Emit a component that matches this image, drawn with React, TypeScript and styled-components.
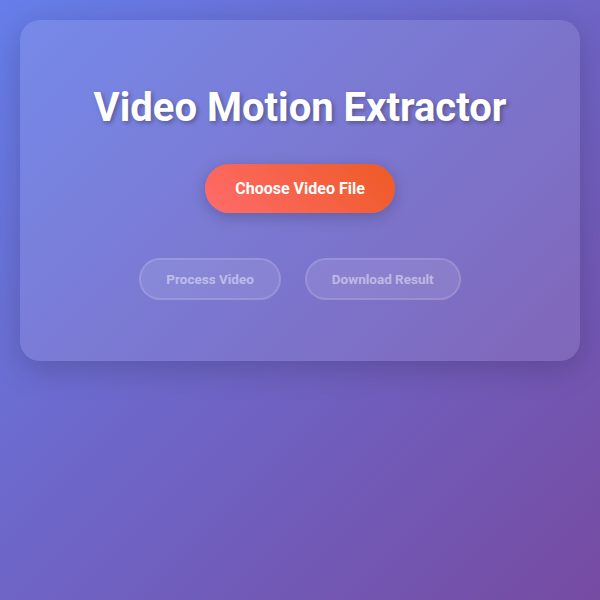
import styled, { createGlobalStyle } from "styled-components"

const GlobalStyle = createGlobalStyle`
  * {
    box-sizing: border-box;
  }
  body {
    margin: 0;
    font-family: Roboto, "Liberation Sans", sans-serif;
    background: linear-gradient(135deg, #667eea 0%, #764ba2 100%);
    min-height: 100vh;
    color: #fff;
  }
`

const Page = styled.div`
  padding: 20px;
`

const Card = styled.div`
  display: flex;
  flex-direction: column;
  align-items: center;
  padding: 40px;
  border-radius: 20px;
  background: rgba(255, 255, 255, 0.1);
  box-shadow: 0 8px 32px rgba(0, 0, 0, 0.18);
`

const Title = styled.h1`
  margin: 24px 0 33px;
  font-size: 40px;
  font-weight: 700;
  line-height: 47px;
  text-shadow: 2px 2px 4px rgba(0, 0, 0, 0.3);
`

const UploadButton = styled.button`
  padding: 15px 30px;
  border: none;
  border-radius: 50px;
  background: linear-gradient(45deg, #ff6b6b, #ee5a24);
  color: #fff;
  font-family: inherit;
  font-size: 16px;
  font-weight: 700;
  box-shadow: 0 4px 15px rgba(0, 0, 0, 0.2);
  cursor: pointer;
`

const ActionRow = styled.div`
  display: flex;
  gap: 24px;
  margin: 45px 0 21px;
`

const ActionButton = styled.button`
  padding: 11px 25px;
  border: 2px solid rgba(255, 255, 255, 0.3);
  border-radius: 50px;
  background: rgba(255, 255, 255, 0.2);
  color: #fff;
  font-family: inherit;
  font-size: 13.5px;
  font-weight: 700;
  opacity: 0.5;
  cursor: not-allowed;
`

export default function App() {
  return (
    <>
      <GlobalStyle />
      <Page>
        <Card>
          <Title>Video Motion Extractor</Title>
          <UploadButton>Choose Video File</UploadButton>
          <ActionRow>
            <ActionButton disabled>Process Video</ActionButton>
            <ActionButton disabled>Download Result</ActionButton>
          </ActionRow>
        </Card>
      </Page>
    </>
  )
}
